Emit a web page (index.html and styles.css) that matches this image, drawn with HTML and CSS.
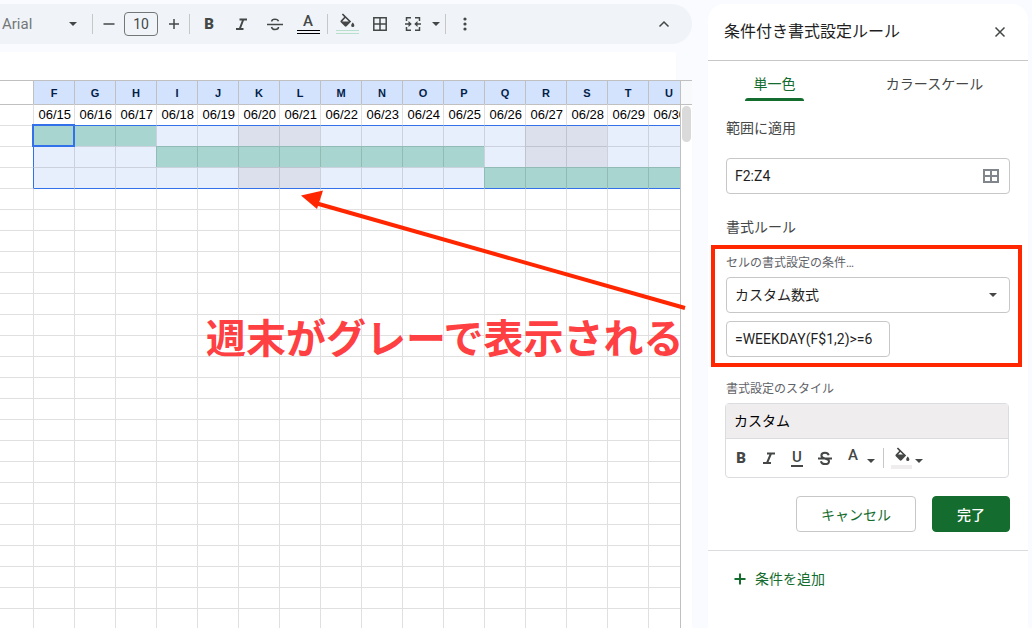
FILE: index.html
```html
<!DOCTYPE html>
<html lang="ja">
<head>
    <meta charset="UTF-8">
    <meta name="viewport" content="width=device-width, initial-scale=1.0">
    <title>条件付き書式設定ルール</title>
    <link rel="stylesheet" href="styles.css">
</head>
<body>
    <main class="editor">
        <div class="toolbar">
            <div class="font-picker">
                <select class="font-select" aria-label="フォント"><option>Arial</option></select>
                <svg class="caret" viewBox="0 0 8 4"><path d="M0 0h8L4 4z"/></svg>
            </div>
            <span class="divider"></span>
            <button class="step" aria-label="縮小"><svg class="icon" viewBox="0 0 18 18"><path class="line" d="M3.5 9h11"/></svg></button>
            <input class="font-size" type="text" value="10" aria-label="フォントサイズ">
            <button class="step" aria-label="拡大"><svg class="icon" viewBox="0 0 18 18"><path class="line" d="M4 9h10M9 4v10"/></svg></button>
            <span class="divider"></span>
            <button class="tool bold">B</button>
            <button class="tool" aria-label="斜体"><svg class="icon" viewBox="0 0 18 18"><path class="line thick" d="M6.500 4.500h7.500M3 14h7.500M10.300 4.500L6.700 14"/></svg></button>
            <button class="tool" aria-label="取り消し線"><svg class="icon" viewBox="0 0 18 18"><path class="line" d="M1 9.500h16M12.500 6.300C12 4.800 11 4.300 9 4.300S5.700 5 5.700 6.500M5.500 12c.4 1.700 1.500 2.500 3.500 2.500s3.500-.8 3.500-2.500"/></svg></button>
            <button class="tool letter underlined text-color">A</button>
            <span class="divider"></span>
            <button class="tool underlined fill-color" aria-label="塗りつぶし"><svg class="icon bucket" viewBox="0 0 18 18"><path d="M3.200 1.800L4.500.5l9.200 9.200L8.500 15a1.500 1.500 0 0 1-2 0L2 10.500a1.500 1.500 0 0 1 0-2L5.800 4.400zM7.100 5.700L3.600 9.500h7.500zM15.500 10.800s1.800 2 1.800 3.200a1.800 1.800 0 0 1-3.600 0c0-1.200 1.800-3.200 1.800-3.200z"/></svg></button>
            <button class="tool" aria-label="枠線"><svg class="icon" viewBox="0 0 18 18"><path class="line" d="M2.800 2.800h12.400v12.400H2.800zM9 3v12M3 9h12"/></svg></button>
            <button class="tool" aria-label="セルを結合"><svg class="icon" viewBox="0 0 18 18"><path class="line" d="M7 2.800H2.500V6M11 2.800h4.500V6M7 15.200H2.500V12M11 15.200h4.500V12M1 9h5M17 9h-5"/><path d="M4.500 6L7.800 9l-3.300 3zM13.500 6l-3.300 3 3.300 3z"/></svg></button>
            <button class="caret-button" aria-label="結合の種類"><svg class="caret" viewBox="0 0 8 4"><path d="M0 0h8L4 4z"/></svg></button>
            <span class="divider"></span>
            <button class="tool" aria-label="その他"><svg class="icon" viewBox="0 0 18 18"><circle cx="9" cy="4" r="1.600"/><circle cx="9" cy="9" r="1.600"/><circle cx="9" cy="14" r="1.600"/></svg></button>
            <button class="tool collapse" aria-label="メニューを隠す"><svg class="icon" viewBox="0 0 18 18"><path class="line" d="M4.500 11.500L9 7l4.500 4.500"/></svg></button>
        </div>

        <div class="formula-bar"></div>

        <div class="sheet">
            <div class="grid">
                <table class="cells">
                    <thead><tr id="columns"><td class="stub"></td></tr></thead>
                    <tbody id="rows"></tbody>
                </table>
            </div>
            <div class="scroll"><div class="thumb"></div></div>
            <svg class="arrow" viewBox="0 0 386 120">
                <path class="shaft" d="M16 8.500L384 113"/>
                <path d="M0 0.500L22 -4.500 16 14z"/>
            </svg>
            <p class="note">週末がグレーで表示される</p>
        </div>
    </main>

    <aside class="panel">
        <header class="panel-header">
            <h1>条件付き書式設定ルール</h1>
            <button class="close" aria-label="閉じる"><svg class="icon" viewBox="0 0 18 18"><path class="line" d="M4.500 4.500l9 9M13.500 4.500l-9 9"/></svg></button>
        </header>

        <nav class="tabs">
            <a class="tab active" href="#single">単一色</a>
            <a class="tab" href="#scale">カラースケール</a>
        </nav>

        <form class="rule" id="single">
            <label class="heading" for="range">範囲に適用</label>
            <div class="field range">
                <input class="box" id="range" type="text" value="F2:Z4">
                <svg class="icon grid-icon" viewBox="0 0 18 18"><path class="line thick" d="M2 3h14v12H2zM9 3v12M2 9h14"/></svg>
            </div>

            <h2 class="heading">書式ルール</h2>
            <div class="highlight">
                <label class="caption" for="condition">セルの書式設定の条件…</label>
                <div class="field">
                    <select class="box" id="condition"><option>カスタム数式</option></select>
                    <svg class="caret" viewBox="0 0 8 4"><path d="M0 0h8L4 4z"/></svg>
                </div>
                <input class="box formula" type="text" value="=WEEKDAY(F$1,2)&gt;=6" aria-label="値または数式">
            </div>

            <p class="caption">書式設定のスタイル</p>
            <div class="style-box">
                <div class="preview">カスタム</div>
                <div class="style-tools">
                    <button type="button" class="tool bold">B</button>
                    <button type="button" class="tool" aria-label="斜体"><svg class="icon" viewBox="0 0 18 18"><path class="line thick" d="M7 4.500h8M3 14h8M11 4.500L7 14"/></svg></button>
                    <button type="button" class="tool letter"><span class="underline">U</span></button>
                    <button type="button" class="tool" aria-label="取り消し線"><svg class="icon" viewBox="0 0 18 18"><path class="line thick" d="M2 9.500h14M12.700 6.200C12.200 4.500 10.900 3.800 9 3.800c-2.200 0-3.600 1-3.600 2.700 0 4.400 7.600 2.200 7.600 5.700 0 1.800-1.600 2.900-4 2.900-2.200 0-3.700-1-4.100-2.900"/></svg></button>
                    <button type="button" class="tool letter raised">A</button>
                    <svg class="caret low" viewBox="0 0 8 4"><path d="M0 0h8L4 4z"/></svg>
                    <span class="divider"></span>
                    <button type="button" class="swatch" aria-label="塗りつぶし"><svg class="icon bucket" viewBox="0 0 18 18"><path d="M3.200 1.800L4.500.5l9.200 9.200L8.500 15a1.500 1.500 0 0 1-2 0L2 10.500a1.500 1.500 0 0 1 0-2L5.800 4.400zM7.100 5.700L4.600 8.500h5.500zM15.500 10.800s1.800 2 1.800 3.200a1.800 1.800 0 0 1-3.600 0c0-1.200 1.800-3.200 1.800-3.200z"/></svg></button>
                    <svg class="caret low" viewBox="0 0 8 4"><path d="M0 0h8L4 4z"/></svg>
                </div>
            </div>

            <div class="actions">
                <button type="button" class="cancel">キャンセル</button>
                <button type="submit" class="done">完了</button>
            </div>
        </form>

        <button class="add"><svg class="icon" viewBox="0 0 18 18"><path class="line thick" d="M3.500 9h11M9 3.500v11"/></svg>条件を追加</button>
    </aside>

    <script src="script.js"></script>
</body>
</html>
```
FILE: styles.css
```css
*,
*::before,
*::after {
    margin: 0;
    padding: 0;
    box-sizing: border-box;
}

body {
    display: flex;
    gap: 16px;
    height: 100vh;
    padding: 4px 4px 0 0;
    overflow: hidden;
    background-color: #f9fbff;
    color: #1f1f1f;
    font-family: Roboto, "Noto Sans CJK JP", sans-serif;
    font-size: 14px;
}

button,
input,
select {
    border: none;
    background: none;
    color: inherit;
    font: inherit;
}

select {
    appearance: none;
}

.icon {
    display: block;
    flex: none;
    width: 18px;
    height: 18px;
    fill: currentColor;
}

.line {
    fill: none;
    stroke: currentColor;
    stroke-width: 1.5;
}

.thick {
    stroke-width: 2;
}

.caret {
    display: block;
    flex: none;
    width: 8px;
    height: 4px;
    fill: #444746;
}

.divider {
    flex: none;
    width: 1px;
    height: 20px;
    background-color: #c7c7c7;
}

/* Editor */
.editor {
    display: flex;
    flex: 1;
    flex-direction: column;
    min-width: 0;
}

.toolbar {
    display: flex;
    flex: none;
    align-items: center;
    gap: 5px;
    height: 40px;
    padding-right: 14px;
    border-radius: 0 20px 20px 0;
    background-color: #f0f4f9;
    color: #444746;
}

.font-picker {
    display: flex;
    align-items: center;
    width: 87px;
    padding-right: 10px;
}

.font-select {
    flex: 1;
    padding-left: 2px;
    color: #747775;
    font-size: 15px;
}

.step,
.tool {
    display: flex;
    flex: none;
    align-items: center;
    justify-content: center;
    width: 28px;
    height: 28px;
}

.step {
    width: 21px;
}

.font-size {
    width: 34px;
    height: 24px;
    border: 1px solid #747775;
    border-radius: 4px;
    text-align: center;
}

.bold {
    font-size: 15px;
    font-weight: 900;
}

.letter {
    font-size: 15px;
    font-weight: 500;
}

.underlined {
    flex-direction: column;
    justify-content: flex-end;
    line-height: 16px;
}

.underlined::after {
    content: "";
    width: 23px;
    height: 4px;
    margin: 1px 0 4px;
    border-top: 1px solid #000;
    border-bottom: 1px solid #000;
}

.underlined.fill-color::after {
    border-color: #b7e1cd;
}

.bucket {
    width: 16px;
    height: 16px;
}

.collapse {
    margin-left: auto;
}

.formula-bar {
    flex: none;
    height: 28px;
    margin: 8px 16px 0 0;
    background-color: #fff;
}

.sheet {
    position: relative;
    display: flex;
    flex: 1;
    min-height: 0;
    background-color: #fff;
}

.grid {
    flex: 1;
    min-width: 0;
    overflow: hidden;
}

.cells {
    width: 689px;
    table-layout: fixed;
    border-spacing: 0;
    font-family: "Liberation Sans", Arial, sans-serif;
    font-size: 13px;
    line-height: 20px;
}

.cells td,
.cells th {
    width: 41px;
    height: 21px;
    border-top: 1px solid rgba(0, 0, 0, 0.12);
    border-left: 1px solid rgba(0, 0, 0, 0.12);
}

.cells th {
    height: 24px;
    border-color: #c0c0c0;
    background-color: #d3e3fd;
    color: #041e49;
    font-size: 11px;
}

.cells .stub {
    width: 33px;
    border-left: none;
}

.cells thead .stub,
.cells .dates td {
    border-top-color: #c0c0c0;
}

.dates td {
    padding-right: 3px;
    color: #000;
    text-align: right;
}

.cells .selected {
    background-color: #e8effc;
}

.cells .weekend {
    background-color: #dbe0ec;
}

.cells .task {
    background-color: #a8d5cf;
}

.cells .edge-top {
    border-top-color: #3271ea;
}

.cells .edge-left {
    border-left-color: #3271ea;
}

.cells .current {
    outline: 2px solid #3271ea;
    outline-offset: -1px;
}

.scroll {
    width: 12px;
    border-top: 1px solid #c0c0c0;
    border-left: 1px solid #c0c0c0;
}

.scroll::before {
    content: "";
    display: block;
    height: 24px;
    border-bottom: 1px solid #c0c0c0;
    background-color: #f8f9fa;
}

.thumb {
    width: 9px;
    height: 36px;
    margin: 1px;
    border-radius: 5px;
    background-color: #dadada;
}

.arrow {
    position: absolute;
    top: 115px;
    left: 301px;
    width: 386px;
    height: 120px;
    overflow: visible;
    fill: #ff2600;
}

.shaft {
    stroke: #ff2600;
    stroke-width: 4;
}

.note {
    position: absolute;
    top: 226px;
    left: 206px;
    color: #ff4043;
    font-family: "Noto Sans CJK JP", sans-serif;
    font-size: 40px;
    font-weight: 700;
    line-height: 60px;
    white-space: nowrap;
}

/* Side panel */
.panel {
    display: flex;
    flex: none;
    flex-direction: column;
    width: 320px;
    border-radius: 16px 16px 0 0;
    background-color: #fff;
}

.panel-header {
    display: flex;
    align-items: center;
    justify-content: space-between;
    height: 57px;
    padding: 0 19px 0 16px;
    border-bottom: 1px solid #c7c7c7;
}

.panel-header h1 {
    padding-bottom: 4px;
    font-size: 16px;
    font-weight: 400;
}

.close {
    color: #444746;
}

.tabs {
    display: flex;
    gap: 28px;
    height: 40px;
    padding: 0 14px;
}

.tab {
    display: flex;
    flex: 1;
    flex-direction: column;
    align-items: center;
    justify-content: space-between;
    padding-top: 13px;
    color: #444746;
    line-height: 20px;
    text-decoration: none;
}

.tabs .tab:first-child {
    flex: none;
    width: 105px;
}

.tabs .active {
    color: #146c2e;
}

.active::after {
    content: "";
    width: 59px;
    height: 3px;
    border-radius: 3px 3px 0 0;
    background-color: #146c2e;
}

.rule {
    padding: 0 18px 18px;
    border-bottom: 1px solid #dadce0;
}

.heading {
    display: block;
    padding: 17px 0 20px;
    color: #444746;
    font-size: 14px;
    font-weight: 400;
    line-height: 20px;
}

.field {
    position: relative;
}

.box {
    display: block;
    width: 100%;
    height: 36px;
    padding: 0 8px;
    border: 1px solid #c7c7c7;
    border-radius: 4px;
}

.field .caret,
.grid-icon {
    position: absolute;
    top: 16px;
    right: 13px;
}

.field .grid-icon {
    top: 9px;
    right: 10px;
    color: #80868b;
}

.range + .heading {
    padding: 23px 0 8px;
}

.highlight {
    margin: 0 -12px 12px -15px;
    padding: 4px 8px 6px 11px;
    border: 4px solid #ff2600;
}

.caption {
    display: block;
    color: #5f6368;
    font-size: 12px;
    line-height: 20px;
}

.highlight .caption {
    padding-bottom: 4px;
}

.formula {
    width: 164px;
    margin-top: 8px;
}

.style-box {
    margin: 4px 1px 18px -1px;
    border: 1px solid #dadce0;
    border-radius: 4px;
}

.preview {
    padding: 0 8px;
    border-bottom: 1px solid #dadce0;
    background-color: #f0edee;
    color: #000;
    line-height: 34px;
}

.style-tools {
    display: flex;
    align-items: center;
    height: 38px;
    padding-left: 1px;
    color: #444746;
}

.underline {
    padding: 0 1px;
    border-bottom: 2px solid;
    line-height: 15px;
}

.raised {
    padding-bottom: 6px;
}

.low {
    margin: 5px 8px 0 0;
}

.swatch {
    display: flex;
    flex-direction: column;
    align-items: center;
    width: 21px;
    margin: 0 3px 0 7px;
}

.swatch::after {
    content: "";
    width: 21px;
    height: 4px;
    margin-top: 2px;
    background-color: #f0edee;
}

.actions {
    display: flex;
    justify-content: flex-end;
    gap: 16px;
}

.cancel,
.done {
    height: 36px;
    padding: 0 24px;
    border: 1px solid #c7c7c7;
    border-radius: 4px;
    color: #146c2e;
}

.done {
    border-color: #146c2e;
    background-color: #146c2e;
    color: #fff;
    font-weight: 500;
}

.add {
    display: flex;
    align-items: center;
    gap: 6px;
    padding: 18px 23px;
    color: #146c2e;
    line-height: 20px;
}
```
FILE: script.js
```js
const columns = 'FGHIJKLMNOPQRSTU'.split('');
const firstDay = 15;
const weekends = ['K', 'L', 'R', 'S'];
const tasks = { 2: ['F', 'H'], 3: ['I', 'P'], 4: ['Q', 'U'] };
const rowCount = 26;

const header = document.getElementById('columns');
columns.forEach(name => {
    const th = document.createElement('th');
    th.textContent = name;
    header.appendChild(th);
});

const body = document.getElementById('rows');
for (let row = 1; row <= rowCount; row++) {
    const tr = body.insertRow();
    tr.className = row === 1 ? 'dates' : '';
    tr.insertCell().className = 'stub';

    columns.forEach((name, i) => {
        const td = tr.insertCell();
        if (row === 1) {
            td.textContent = '06/' + (firstDay + i);
        }
        if (row === 2 || row === 5) {
            td.classList.add('edge-top');
        }
        if (tasks[row]) {
            const [start, end] = tasks[row];
            td.classList.add('selected');
            if (weekends.includes(name)) td.classList.add('weekend');
            if (name >= start && name <= end) td.classList.add('task');
            if (i === 0) td.classList.add('edge-left');
        }
        if (row === 2 && i === 0) {
            td.classList.add('current');
        }
    });
}
```
